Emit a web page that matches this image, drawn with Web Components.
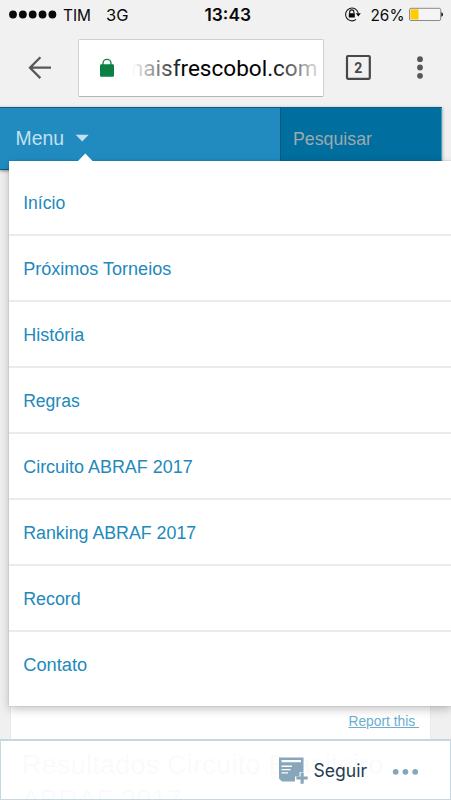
<!DOCTYPE html>
<html lang="pt-BR">
<head>
<meta charset="utf-8">
<title>maisfrescobol.com</title>
<style>
  html, body {margin: 0; height: 100%; overflow: hidden;}
  body {background: #f1f1f1; font-family: "Liberation Sans", Arial, sans-serif;}
</style>
</head>
<body>
<phone-screen>
  <status-bar slot="chrome" carrier="TIM" network="3G" time="13:43" battery="26"></status-bar>
  <browser-bar slot="chrome" tabs="2">maisfrescobol.com</browser-bar>
  <site-header slot="page" label="Menu" search="Pesquisar"></site-header>
  <drop-menu slot="menu">
    <menu-item w="42">Início</menu-item>
    <menu-item w="148">Próximos Torneios</menu-item>
    <menu-item w="61">História</menu-item>
    <menu-item w="56.5">Regras</menu-item>
    <menu-item w="169.5">Circuito ABRAF 2017</menu-item>
    <menu-item w="173">Ranking ABRAF 2017</menu-item>
    <menu-item w="57.5">Record</menu-item>
    <menu-item w="64">Contato</menu-item>
  </drop-menu>
  <post-card slot="page" report="Report this">Resultados Circuito Brasileiro ABRAF 2017</post-card>
  <follow-bar slot="footer">Seguir</follow-bar>
</phone-screen>

<script>
const fit = (text, x, y, size, width, extra = '') =>
  `<text x="${x}" y="${y}" font-size="${size}" textLength="${width}" lengthAdjust="spacingAndGlyphs" ${extra}>${text}</text>`

const define = (name, render) =>
  customElements.define(
    name,
    class extends HTMLElement {
      constructor() {
        super()
        this.attachShadow({ mode: 'open' })
      }

      connectedCallback() {
        this.shadowRoot.innerHTML = render(this)
      }
    }
  )

define('phone-screen', () => `
  <style>
    :host {display: flex; flex-direction: column; position: relative; width: 451px; height: 800px; overflow: hidden; background: #f0f0f0;}
    main {flex: 1; position: relative; display: flex; flex-direction: column; justify-content: space-between;}
    .menu {position: absolute; left: 9px; top: 53.5px; z-index: 2;}
    footer {position: absolute; left: 0; bottom: 0; z-index: 3;}
  </style>
  <slot name="chrome"></slot>
  <main>
    <slot name="page"></slot>
    <div class="menu"><slot name="menu"></slot></div>
    <footer><slot name="footer"></slot></footer>
  </main>
`)

define('status-bar', el => `
  <style>
    :host {display: block; height: 30px; background: #f1f1f1; font-family: Inter, "Liberation Sans", sans-serif;}
    svg {display: block;}
  </style>
  <svg width="451" height="30" fill="#080808">
    ${[0, 1, 2, 3, 4].map(i => `<circle cx="${13 + i * 9.85}" cy="14.5" r="3.9"/>`).join('')}
    ${fit(el.getAttribute('carrier'), 63, 20.6, 16.5, 28)}
    ${fit(el.getAttribute('network'), 106, 20.6, 16.5, 22.5)}
    ${fit(el.getAttribute('time'), 204.5, 20.6, 17, 46.5, 'font-weight="600"')}
    <g fill="none" stroke="#151515" stroke-width="1.1">
      <path d="M356 19.4A6.4 6.4 0 1 1 358.2 13"/>
      <path d="M349.7 13.5V12a2.1 2.1 0 0 1 4.2 0v1.5"/>
    </g>
    <path d="M348.8 13.3h6v4.3h-6zM355.8 13.2h5l-2.5 3.2z"/>
    ${fit(el.getAttribute('battery') + '%', 370.5, 20.6, 16.5, 34)}
    <rect x="409.5" y="8.3" width="31.2" height="12.2" rx="1.5" fill="#f5f5f5" stroke="#8a8a8a"/>
    <rect x="410.5" y="9.3" width="8" height="10.2" fill="#fc0"/>
    <path d="M441.3 12.3q1.7.3 1.7 2.2t-1.7 2.2z"/>
  </svg>
`)

define('browser-bar', el => `
  <style>
    :host {display: flex; align-items: center; box-sizing: border-box; height: 77px; padding: 0 20px 2px 25px; background: #f1f1f1; font-family: Roboto, sans-serif;}
    svg {display: block; flex: none;}
    .url {display: flex; align-items: center; box-sizing: border-box; width: 246px; height: 58px; margin: 0 21px 0 26px; padding-left: 20px; background: #fff; border: 1px solid #d0d0d0; border-bottom: 1px solid #b5b5b5; border-radius: 2px;}
    .host {margin-left: 17px; width: 193px;}
  </style>
  <svg width="27" height="30" fill="none" stroke="#58585a" stroke-width="2.3"><path d="M15.4 4.3L5 14.7L15.4 25.1M5 14.7H26"/></svg>
  <div class="url">
    <svg width="16" height="20"><path d="M4 8V5.3a4 4 0 0 1 8 0V8" fill="none" stroke="#0b8043" stroke-width="1.3"/><rect x="1" y="6.2" width="14" height="12.6" rx="1.3" fill="#0b8043"/></svg>
    <svg class="host" height="32">
      <defs><linearGradient id="fade" gradientUnits="userSpaceOnUse" x1="0" x2="193" y1="0" y2="0">
        <stop offset="0" stop-color="#000" stop-opacity="0"/><stop offset=".27" stop-color="#000"/>
        <stop offset=".72" stop-color="#000"/><stop offset="1" stop-color="#000" stop-opacity="0"/>
      </linearGradient></defs>
      ${fit(el.textContent.trim(), -8.5, 23.5, 22, 194, 'fill="url(#fade)"')}
    </svg>
  </div>
  <svg width="27" height="27"><rect x="2" y="2" width="22.8" height="22.8" rx="1" fill="none" stroke="#48484a" stroke-width="2.2"/><text x="13.3" y="18.5" font-size="14" font-weight="700" fill="#48484a" text-anchor="middle">${el.getAttribute('tabs')}</text></svg>
  <svg width="8" height="25" fill="#58585a" style="margin-left: 44px"><circle cx="4" cy="4.2" r="2.9"/><circle cx="4" cy="12.5" r="2.9"/><circle cx="4" cy="20.8" r="2.9"/></svg>
`)

define('site-header', el => `
  <style>
    :host {display: flex; box-sizing: border-box; width: 441.5px; height: 63px; background: #218bc0; border-top: 1px solid #07608b; border-bottom: 1px solid #07608b; box-shadow: 0 1px 3px #888;}
    .menu {width: 280px;}
    .search {flex: 1; background: #006e9e; border-left: 1px solid #045c83; border-right: 1px solid #4a9bc0;}
    svg {display: block;}
  </style>
  <div class="menu"><svg width="110" height="61" fill="#c3e0ef">${fit(el.getAttribute('label'), 15.5, 36.5, 19.5, 48.5)}<path d="M75.7 26.8h13l-6.5 6.7z"/></svg></div>
  <div class="search"><svg width="140" height="61" fill="#9fa9ae">${fit(el.getAttribute('search'), 12, 36.5, 18.5, 79)}</svg></div>
`)

define('drop-menu', () => `
  <style>
    :host {display: block; position: relative; box-sizing: border-box; width: 441.5px; height: 545.5px; padding-top: 9px; background: #fff; box-shadow: 0 3px 9px rgba(0, 0, 0, .24), 0 0 1px rgba(0, 0, 0, .25);}
    .tip {position: absolute; left: 68px; top: -8px; fill: #fff;}
    ::slotted(menu-item:last-child) {border-bottom: 0;}
  </style>
  <svg class="tip" width="17" height="9"><path d="M0 9L8.3 .5L16.6 9z"/></svg>
  <slot></slot>
`)

define('menu-item', el => `
  <style>
    :host {display: block; box-sizing: border-box; height: 66.15px; border-bottom: 2px solid #ebebeb; color: #2189bb;}
    svg {display: block;}
  </style>
  <svg width="300" height="60" fill="currentColor">${fit(el.textContent.trim(), 14.2, 39.1, 18, el.getAttribute('w'))}</svg>
`)

define('post-card', el => `
  <style>
    :host {display: block; box-sizing: border-box; width: 419px; height: 130px; margin: 0 0 -30px 11px; background: #fff; box-shadow: 0 0 1px #ccc;}
    .report {margin: 0 11px 0 0; padding-top: 13px; text-align: right; font-size: 13.8px; line-height: 17px; color: #6baed0; text-decoration: underline; white-space: pre;}
    h1 {margin: 18px 0 0 11px; font-size: 27px; line-height: 35px; font-weight: 400; color: #222; letter-spacing: .25px;}
  </style>
  <div class="report">${el.getAttribute('report')} </div>
  <h1>${el.textContent}</h1>
`)

define('follow-bar', el => `
  <style>
    :host {display: block; box-sizing: border-box; width: 451px; height: 61px; background: rgba(255, 255, 255, .98); border: 1px solid #c6d7e2; border-top-width: 2px;}
    svg {display: block;}
  </style>
  <svg width="449" height="58" fill="#87a6bc">
    <path fill-rule="evenodd" d="M278 16.5h24.5v14.5h-4v4.5h-4.5v5H281l-3-3zM280.5 19v2.3h19.5v-2.3zM280.5 24.6v1.3h10.5V24.6zM280.5 28v1.3h9v-1.3zM280.5 31.3v1.3h6.5v-1.3z"/>
    <path d="M299.6 31.5h3.1v4h4v3h-4v4.2h-3.1v-4.2h-4.2v-3h4.2z"/>
    ${fit(el.textContent.trim(), 312.5, 35.5, 18.3, 53.5, 'fill="#223b50" font-family="Inter"')}
    <circle cx="394.7" cy="30.8" r="2.9"/><circle cx="404.4" cy="30.8" r="2.9"/><circle cx="414.2" cy="30.8" r="2.9"/>
  </svg>
`)
</script>
</body>
</html>
